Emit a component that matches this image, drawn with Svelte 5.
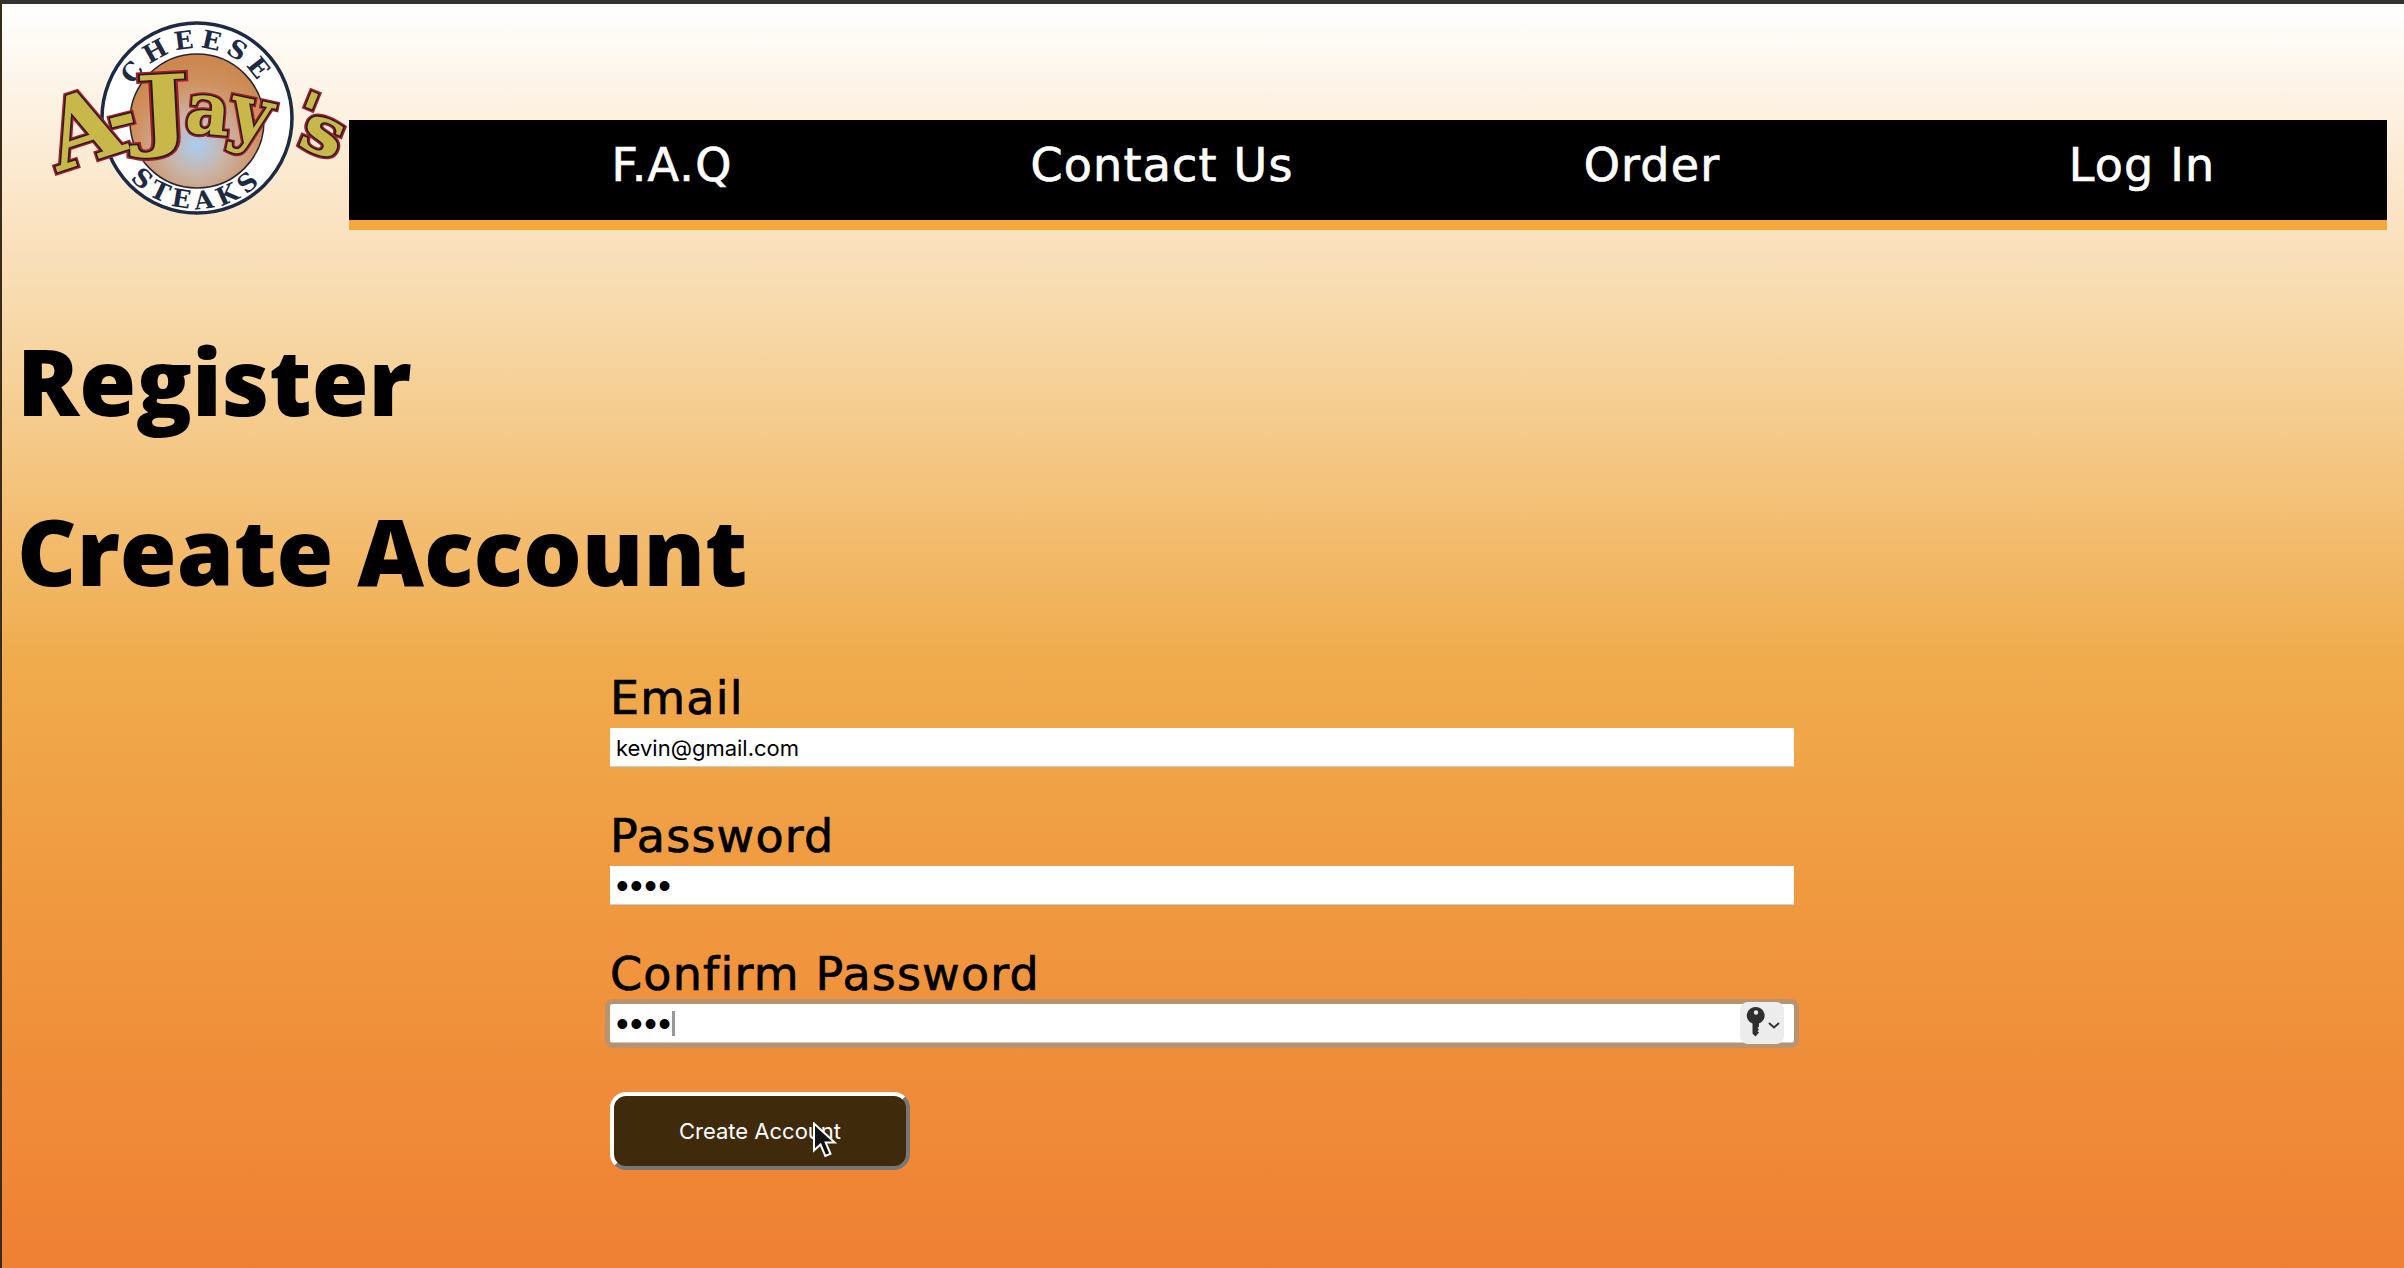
<script>
    const links = ['F.A.Q', 'Contact Us', 'Order', 'Log In'];
    const fields = [
        { label: 'Email', type: 'text', value: 'kevin@gmail.com' },
        { label: 'Password', type: 'password', value: 'abcd' },
        { label: 'Confirm Password', type: 'password', value: 'abcd', focused: true }
    ];
</script>

<div class="page">
    <header class="header">
        <a class="logo" href="#home" aria-label="A-Jay's Cheese Steaks">
            <svg width="349" height="236" viewBox="0 0 349 236">
                <defs>
                    <radialGradient id="disc" cx="0.5" cy="0.68" r="0.62">
                        <stop offset="0" stop-color="#a9cdf2" />
                        <stop offset="0.35" stop-color="#c9b5a8" />
                        <stop offset="0.75" stop-color="#cf9160" />
                        <stop offset="1" stop-color="#cc8850" />
                    </radialGradient>
                    <path id="arcTop" d="M 125 120 A 72 72 0 0 1 269 120" />
                    <path id="arcBottom" d="M 108 120 A 89 89 0 0 0 286 120" />
                    <g id="word">
                        <text transform="translate(58 172) rotate(-18)" font-size="96">A</text>
                        <text transform="translate(112 142) rotate(-14)" font-size="70">-</text>
                        <text transform="translate(138 140) rotate(-3) scale(1.35 1.05)" font-size="84">J</text>
                        <text transform="translate(184 132) rotate(5) scale(0.95 1)" font-size="72">a</text>
                        <text transform="translate(226 134) rotate(12) scale(0.95 1)" font-size="76">y</text>
                        <text transform="translate(290 130) rotate(22)" font-size="60">'</text>
                        <text transform="translate(296 145) rotate(22) scale(1.1 1)" font-size="68">s</text>
                    </g>
                </defs>
                <circle cx="197" cy="118" r="95" fill="#fff" stroke="#1d2a44" stroke-width="3.5" />
                <circle cx="197" cy="121" r="67" fill="url(#disc)" stroke="#2a2430" stroke-width="1.5" />
                <text class="ring"><textPath href="#arcTop" startOffset="50%" text-anchor="middle">CHEESE</textPath></text>
                <text class="ring"><textPath href="#arcBottom" startOffset="50%" text-anchor="middle">STEAKS</textPath></text>
                <use href="#word" class="mark-red" />
                <use href="#word" class="mark-dark" />
                <use href="#word" class="mark-fill" />
            </svg>
        </a>
        <nav class="nav">
            {#each links as link}
                <a class="nav-link" href="#{link}">{link}</a>
            {/each}
        </nav>
    </header>

    <main class="main">
        <h1>Register</h1>
        <h2>Create Account</h2>
        <form class="form" on:submit|preventDefault>
            {#each fields as field}
                <label class="field">
                    <span class="field-label">{field.label}</span>
                    <span class="input-wrap" class:focused={field.focused}>
                        <input type={field.type} value={field.value} readonly />
                        {#if field.focused}
                            <i class="caret"></i>
                            <span class="key">
                                <svg width="44" height="42" viewBox="0 0 44 42">
                                    <path fill="#2f2f2f" fill-rule="evenodd" d="M16 5a8.500 8.500 0 0 1 3 16.500v3l-1.500 1.500 1.500 1.500-1.500 1.500 1.500 1.500-3.500 4-3-3V21.500A8.500 8.500 0 0 1 16 5zm0 3.300a2.200 2.200 0 1 0 0 4.400 2.200 2.200 0 0 0 0-4.400z" />
                                    <path fill="none" stroke="#333" stroke-width="2" d="M29 21l5 4.500 5-4.500" />
                                </svg>
                            </span>
                        {/if}
                    </span>
                </label>
            {/each}
            <button class="submit" type="submit">Create Account</button>
        </form>
    </main>

    <svg class="pointer" width="28" height="38" viewBox="0 0 28 38">
        <path d="M2 1.500v27l6.500-6 4.800 11.500 5.200-2.200-4.800-11.200h9z" fill="#111" stroke="#fff" stroke-width="2" />
    </svg>
</div>

<style>
    :global(body) {
        margin: 0;
    }
    .page {
        position: relative;
        box-sizing: border-box;
        width: 2404px;
        height: 1268px;
        overflow: hidden;
        border-top: 4px solid #333;
        border-left: 2px solid #3a2a18;
        background: linear-gradient(180deg, #fff 0px, #fbe6c9 190px, #f7d7a5 330px, #f0ac4e 650px, #f09a40 880px, #ef8033 1264px);
        font-family: "DejaVu Sans", sans-serif;
    }
    .header {
        display: flex;
        align-items: flex-start;
        padding-right: 17px;
    }
    .logo {
        display: block;
        flex: none;
        width: 347px;
        height: 236px;
    }
    .logo svg {
        display: block;
        margin-left: -2px;
        margin-top: -4px;
    }
    .ring {
        font-family: "DejaVu Serif", serif;
        font-weight: 700;
        font-size: 25px;
        letter-spacing: 6px;
        fill: #1d2a44;
    }
    :global(#word text) {
        font-family: "DejaVu Serif", serif;
        font-weight: 700;
    }
    .mark-red {
        fill: #a01f2a;
        stroke: #a01f2a;
        stroke-width: 6px;
    }
    .mark-dark {
        fill: #2a1a1a;
        stroke: #2a1a1a;
        stroke-width: 3px;
    }
    .mark-fill {
        fill: #c8b84a;
    }
    .nav {
        flex: 1;
        box-sizing: border-box;
        height: 110px;
        margin-top: 116px;
        padding: 0 0 10px 78px;
        display: grid;
        grid-template-columns: repeat(4, 490px);
        align-items: center;
        justify-items: center;
        background: #000;
        border-bottom: 10px solid #f5a83a;
    }
    .nav-link {
        color: #fff;
        text-decoration: none;
        font-size: 46px;
        letter-spacing: 1.200px;
        -webkit-text-stroke: 0.7px #fff;
    }
    .main {
        padding-left: 15px;
    }
    h1, h2 {
        margin: 0;
        color: #000;
        font-family: "Open Sans", sans-serif;
        font-weight: 800;
        font-size: 92px;
        line-height: 130px;
    }
    h1 {
        margin-top: 76px;
    }
    h2 {
        margin-top: 40px;
    }
    .form {
        margin: 52px 0 0 593px;
        width: 1184px;
        display: flex;
        flex-direction: column;
    }
    .field {
        display: flex;
        flex-direction: column;
        height: 138px;
    }
    .field-label {
        font-size: 46px;
        line-height: 60px;
        letter-spacing: 1.200px;
        color: #000;
        -webkit-text-stroke: 0.7px #000;
    }
    .input-wrap {
        position: relative;
        display: block;
        height: 39px;
    }
    .input-wrap.focused {
        outline: 5px solid #b99370;
        border-radius: 3px;
    }
    input {
        display: block;
        box-sizing: border-box;
        width: 100%;
        height: 100%;
        padding: 1px 6px 0;
        border: 0;
        border-bottom: 1px solid #ccc;
        outline: 0;
        background: #fff;
        color: #000;
        font-family: "Inter", sans-serif;
        font-size: 22px;
    }
    input[type="password"] {
        font-family: "Liberation Sans", sans-serif;
        font-size: 36px;
        letter-spacing: 1.500px;
    }
    .caret {
        position: absolute;
        left: 62px;
        top: 7px;
        width: 3px;
        height: 25px;
        background: #999;
    }
    .key {
        position: absolute;
        right: 10px;
        top: -2px;
        width: 44px;
        height: 42px;
        border-radius: 8px;
        background: #ececec;
    }
    .key svg {
        display: block;
    }
    .submit {
        box-sizing: border-box;
        width: 300px;
        height: 78px;
        margin-top: 10px;
        border: 4px solid;
        border-color: #fff #777 #777 #fff;
        border-radius: 16px;
        background: #3f2a0c;
        color: #fff;
        font-family: "Inter", sans-serif;
        font-size: 22px;
    }
    .pointer {
        position: absolute;
        left: 810px;
        top: 1118px;
    }
</style>
